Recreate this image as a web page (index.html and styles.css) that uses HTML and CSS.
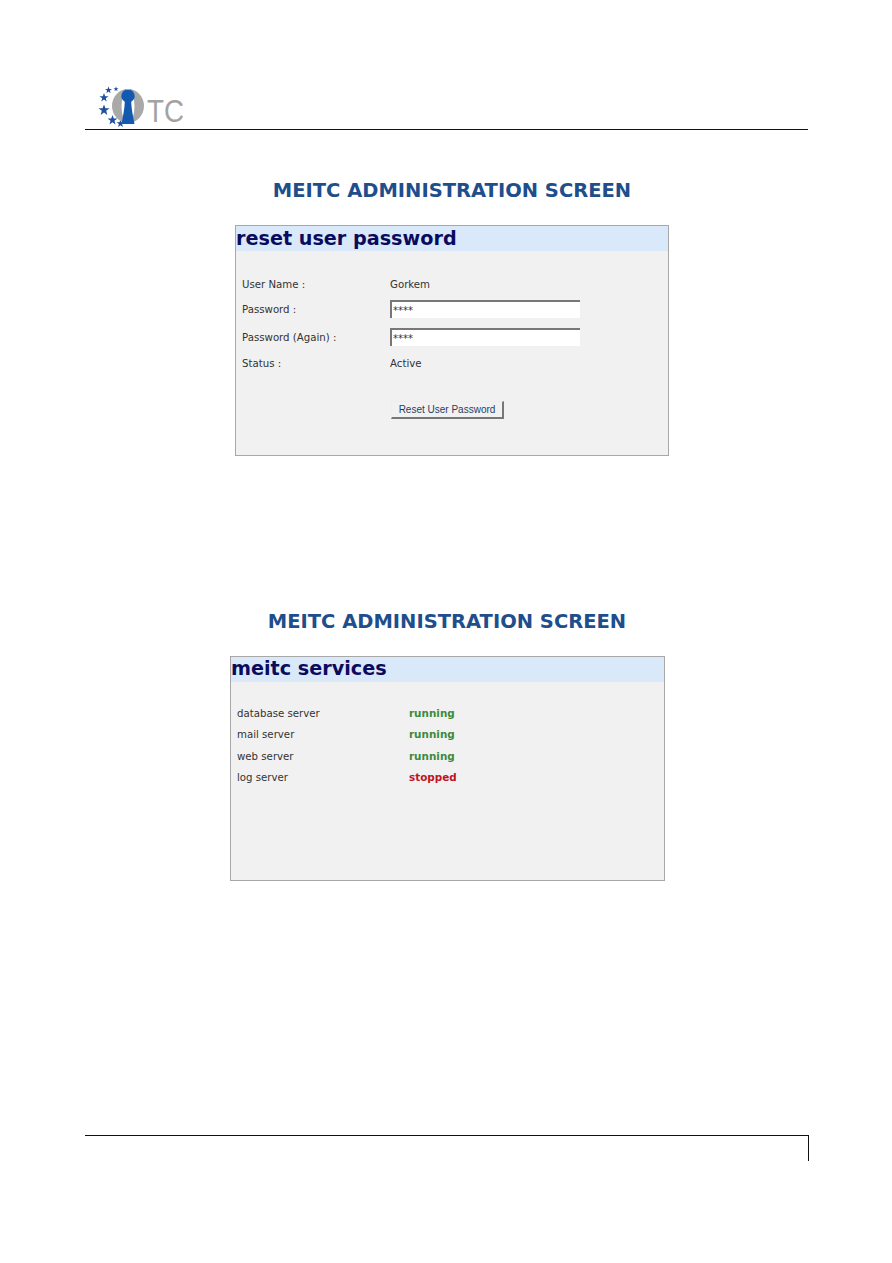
FILE: index.html
```html
<!DOCTYPE html>
<html lang="en">

    <head>
        <meta charset="UTF-8">
        <meta name="viewport" content="width=device-width, initial-scale=1.0">
        <title>MEITC Administration Screen</title>
        <link rel="stylesheet" href="styles.css">
    </head>

    <body>
        <header class="page-header">
            <svg class="logo" width="100" height="44" viewBox="95 85 100 44">
                <defs>
                    <polygon id="star" points="0,-5 1.300,-1.500 5,-1.500 2,.7 3,4.500 0,2.200 -3,4.500 -2,.7 -5,-1.500 -1.300,-1.500"/>
                </defs>
                <g fill="#1f4f9c">
                    <use href="#star" transform="translate(108.500 90) scale(.7)"/>
                    <use href="#star" transform="translate(116 89) scale(.5)"/>
                    <use href="#star" transform="translate(104 97.500) scale(.9)"/>
                    <use href="#star" transform="translate(104 110) scale(1.100)"/>
                    <use href="#star" transform="translate(112.500 120) scale(1)"/>
                    <use href="#star" transform="translate(120.500 123.500) scale(.8)"/>
                </g>
                <ellipse cx="128" cy="106" rx="16" ry="17" fill="#a9a9a9"/>
                <ellipse cx="128" cy="106" rx="6.500" ry="17" fill="white"/>
                <path d="M128 89.500a6.500 6.500 0 0 1 3.200 12.200c.2 7 1.800 14.500 3.300 22.300h-13c1.500-7.800 3.100-15.300 3.300-22.300a6.500 6.500 0 0 1 3.200-12.200z" fill="#1259b0"/>
                <text class="logo-text" x="147" y="122" textLength="37" lengthAdjust="spacingAndGlyphs">TC</text>
            </svg>
        </header>

        <main>
            <section class="screen screen-reset">
                <h1>MEITC ADMINISTRATION SCREEN</h1>
                <div class="panel panel-reset">
                    <h2>reset user password</h2>
                    <div class="form-grid">
                        <span>User Name :</span>
                        <span>Gorkem</span>
                        <label for="pass1">Password :</label>
                        <input id="pass1" type="text" value="****">
                        <label for="pass2">Password (Again) :</label>
                        <input id="pass2" type="text" value="****">
                        <span>Status :</span>
                        <span>Active</span>
                    </div>
                    <button class="reset-button">Reset User Password</button>
                </div>
            </section>

            <section class="screen screen-services">
                <h1>MEITC ADMINISTRATION SCREEN</h1>
                <div class="panel panel-services">
                    <h2>meitc services</h2>
                    <div class="service-grid">
                        <span>database server</span>
                        <span class="running">running</span>
                        <span>mail server</span>
                        <span class="running">running</span>
                        <span>web server</span>
                        <span class="running">running</span>
                        <span>log server</span>
                        <span class="stopped">stopped</span>
                    </div>
                </div>
            </section>
        </main>

        <footer class="page-footer"></footer>
    </body>

</html>
```

FILE: styles.css
```css
body {
    margin: 0;
    background-color: white;
    font-family: "DejaVu Sans", sans-serif;
    color: #333;
}

.page-header {
    box-sizing: border-box;
    width: 723px;
    height: 130px;
    margin-left: 85px;
    padding: 85px 0 0 10px;
    border-bottom: 1px solid #111;
}

.logo {
    display: block;
}

.logo-text {
    font-family: "Liberation Sans", sans-serif;
    font-size: 32px;
    fill: #a3a3a3;
}

h1 {
    margin: 0;
    font-size: 19.500px;
    line-height: 24px;
    font-weight: bold;
    text-align: center;
    color: #1f4e8c;
}

.screen-reset {
    width: 904px;
    padding-top: 49px;
}

.screen-services {
    width: 894px;
    padding-top: 154px;
}

.panel {
    box-sizing: border-box;
    border: 1px solid #a8a8a8;
    background-color: #f1f1f1;
}

.panel h2 {
    height: 25px;
    margin: 0;
    background-color: #d9e9fa;
    font-size: 19.200px;
    line-height: 24px;
    color: #0b0b5e;
}

.panel-reset {
    width: 434px;
    height: 231px;
    margin: 22px 0 0 235px;
}

.panel-reset h2 {
    line-height: 25px;
}

.panel-services {
    width: 435px;
    height: 225px;
    margin: 22px 0 0 230px;
}

.form-grid {
    display: grid;
    grid-template-columns: 148px 190px;
    grid-template-rows: 12px 18px 18px 14px;
    row-gap: 10px;
    align-items: center;
    margin: 27px 0 0 6px;
    font-size: 10.200px;
}

.form-grid input {
    box-sizing: border-box;
    width: 190px;
    height: 18px;
    padding: 0 0 0 1px;
    border: none;
    border-top: 2px solid #777;
    border-left: 2px solid #777;
    background-color: white;
    font-family: "DejaVu Sans", sans-serif;
    font-size: 10px;
    color: #333;
}

.reset-button {
    display: block;
    box-sizing: border-box;
    width: 113px;
    height: 18px;
    margin: 31px 0 0 155px;
    padding: 0;
    border: 1px solid;
    border-color: #eee #777 #777 #eee;
    border-width: 1px 2px 2px 1px;
    background-color: #f1f1f1;
    font-family: "Liberation Sans", sans-serif;
    font-size: 10px;
    color: #1f3f66;
}

.service-grid {
    display: grid;
    grid-template-columns: 172px auto;
    grid-auto-rows: 21.300px;
    align-items: baseline;
    margin: 25px 0 0 6px;
    font-size: 10.200px;
}

.running,
.stopped {
    font-weight: bold;
    font-size: 10.400px;
}

.running {
    color: #3d8b3d;
}

.stopped {
    color: #c0141e;
}

.page-footer {
    box-sizing: border-box;
    width: 724px;
    height: 26px;
    margin: 254px 0 0 85px;
    border-top: 1px solid #111;
    border-right: 1px solid #111;
}
```
